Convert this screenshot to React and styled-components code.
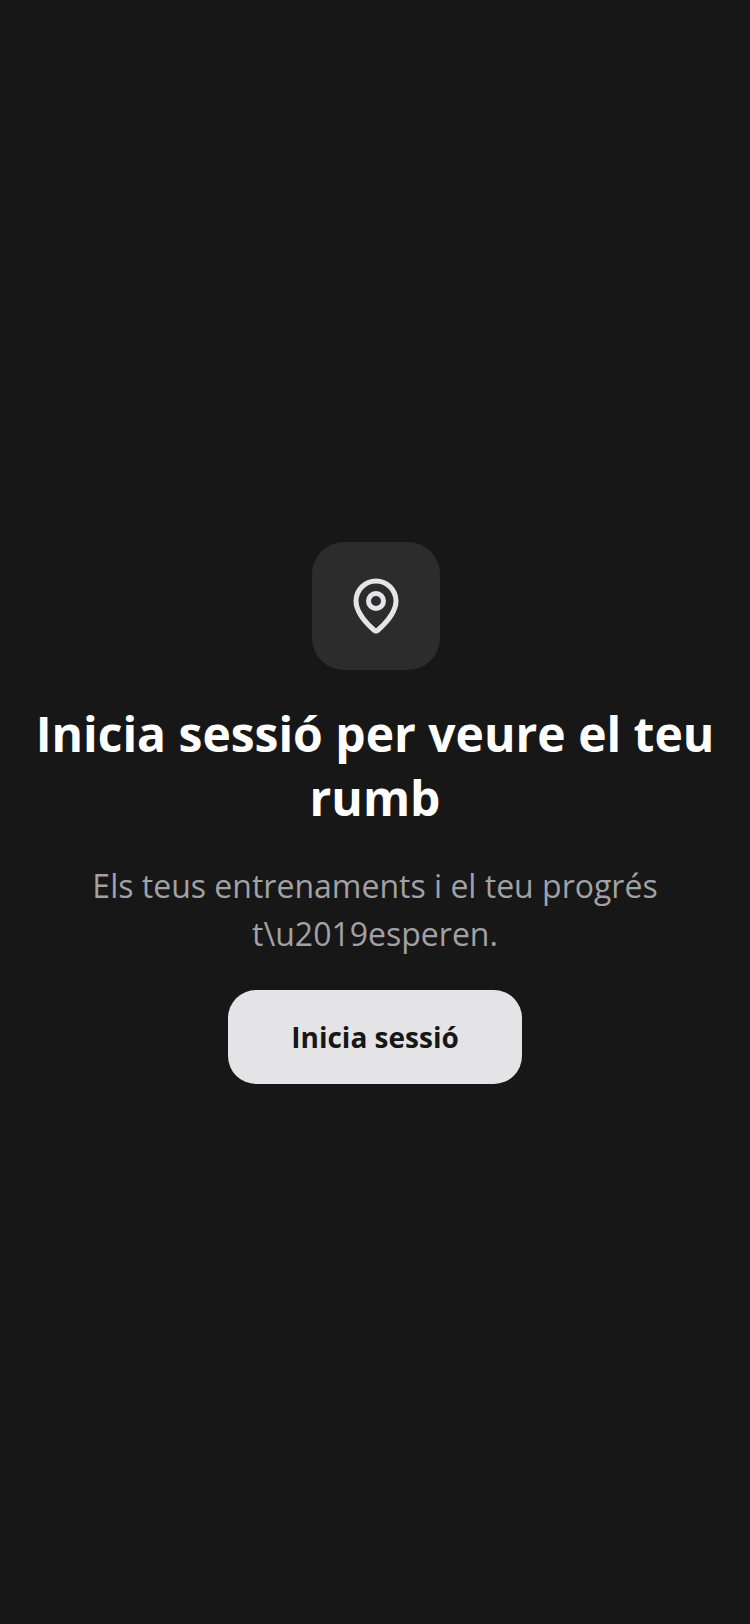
import React from 'react'
import styled, { createGlobalStyle } from 'styled-components'
import { MapPin } from 'lucide-react'

const GlobalStyle = createGlobalStyle`
  html, body {
    margin: 0;
    padding: 0;
    background: #171717;
  }
`

const Screen = styled.div`
  width: 750px;
  height: 1624px;
  box-sizing: border-box;
  padding: 2px 32px 0;
  display: flex;
  flex-direction: column;
  align-items: center;
  justify-content: center;
  background: #171717;
  font-family: "Open Sans", sans-serif;
  text-align: center;
`

const IconTile = styled.div`
  width: 128px;
  height: 128px;
  border-radius: 32px;
  background: #2c2c2c;
  display: flex;
  align-items: center;
  justify-content: center;
  color: #e5e5e7;
  margin: 0 0 32px 2px;
`

const Title = styled.h1`
  margin: 0 0 32px;
  font-size: 48px;
  line-height: 64px;
  font-weight: 700;
  color: #ffffff;
`

const Subtitle = styled.p`
  margin: 0 0 32px;
  font-size: 32px;
  line-height: 48px;
  font-weight: 400;
  color: #a1a1a6;
`

const LoginButton = styled.button`
  width: 294px;
  height: 94px;
  border: none;
  border-radius: 28px;
  background: #e4e4e6;
  color: #171717;
  font-family: inherit;
  font-size: 28px;
  font-weight: 700;
`

export default function App() {
  return (
    <Screen>
      <GlobalStyle />
      <IconTile>
        <MapPin size={60} strokeWidth={2} />
      </IconTile>
      <Title>Inicia sessió per veure el teu rumb</Title>
      <Subtitle>Els teus entrenaments i el teu progrés t\u2019esperen.</Subtitle>
      <LoginButton>Inicia sessió</LoginButton>
    </Screen>
  )
}
